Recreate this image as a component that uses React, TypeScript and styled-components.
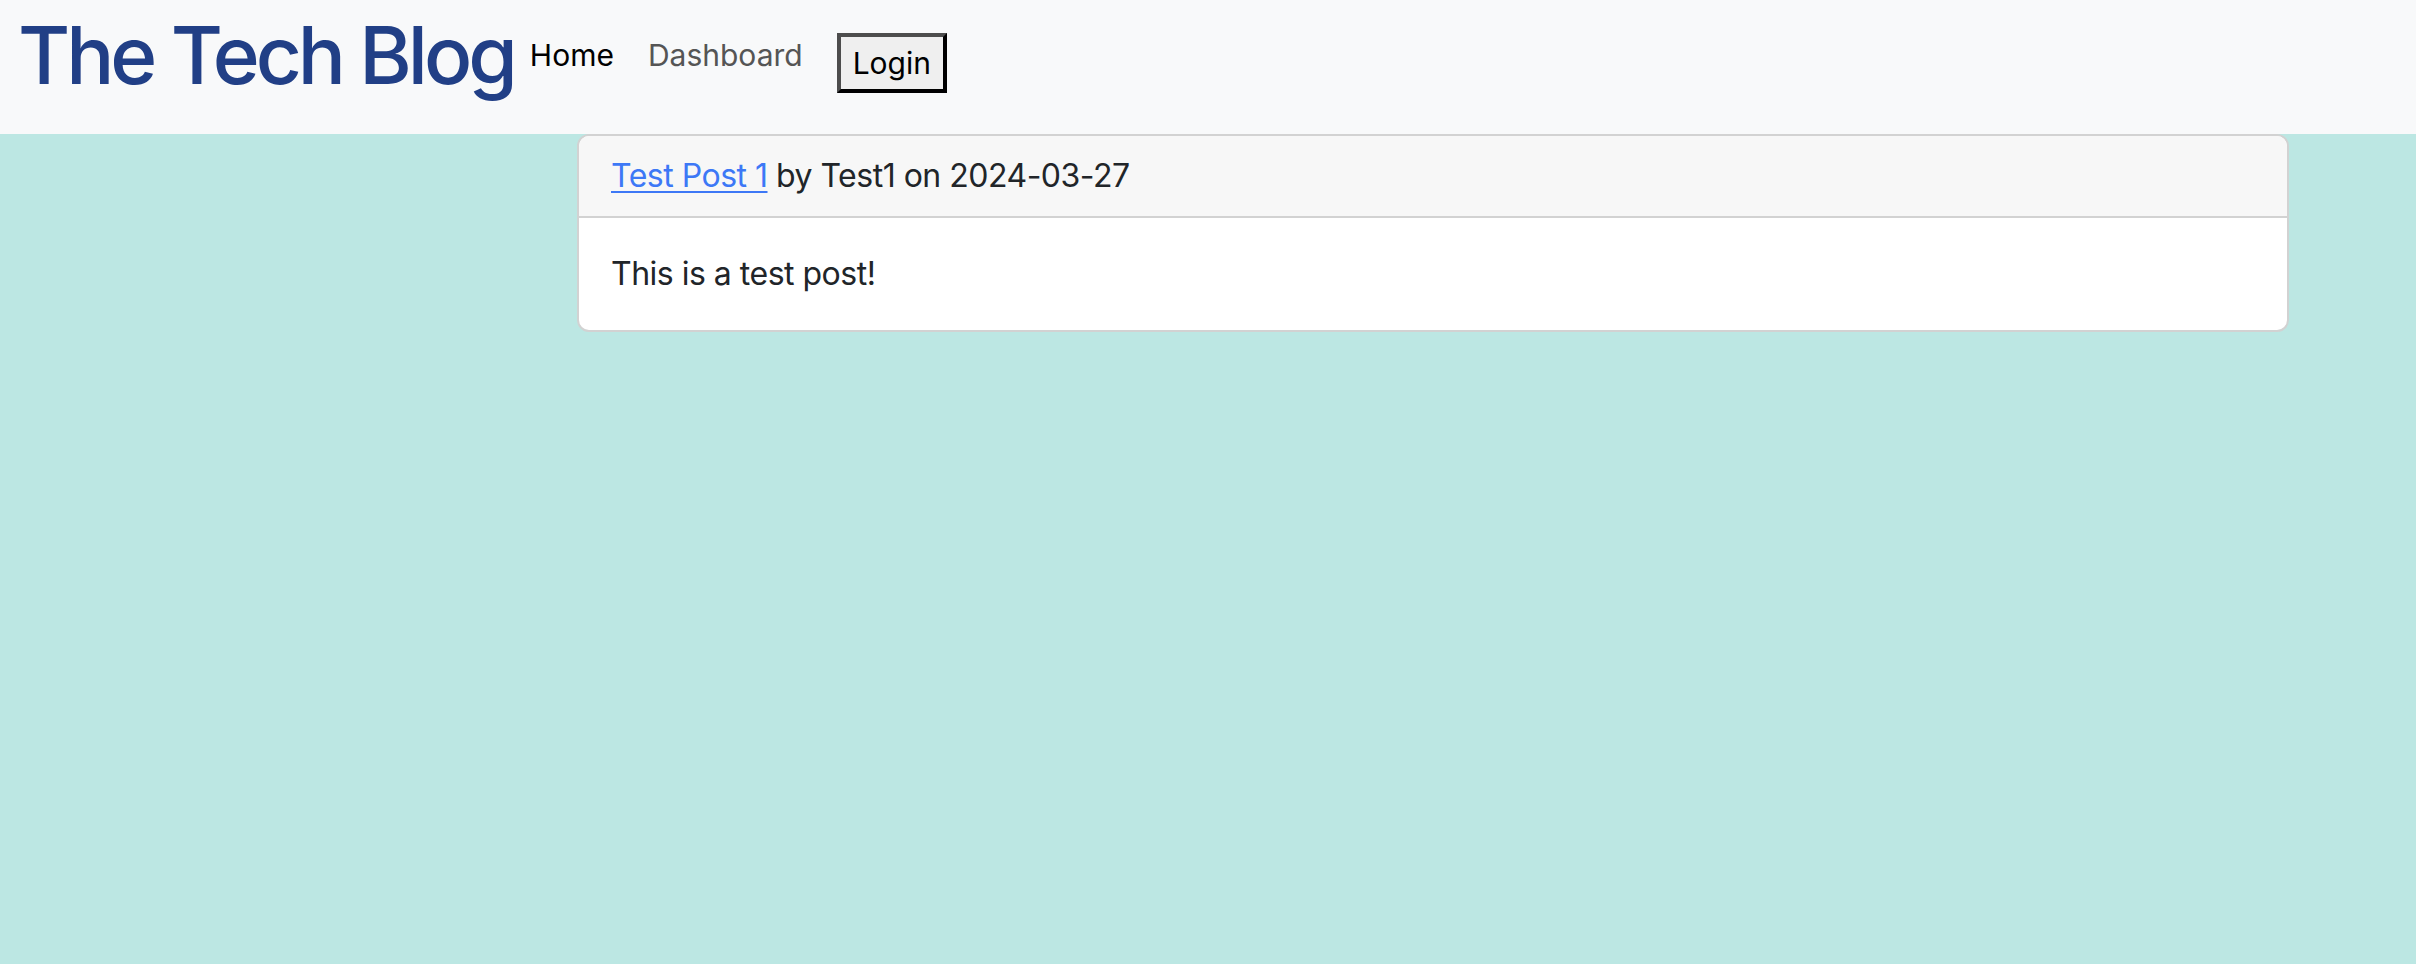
import React from "react";
import styled, { createGlobalStyle } from "styled-components";

const GlobalStyle = createGlobalStyle`
  html, body {
    margin: 0;
    padding: 0;
    min-height: 100%;
    background: #bce7e3;
  }
  body {
    font-family: Inter, "Liberation Sans", Arial, sans-serif;
    color: #212529;
    -webkit-font-smoothing: antialiased;
  }
  * { box-sizing: border-box; }
`;

const Page = styled.div`
  min-height: 964px;
  background: #bce7e3;
  display: flex;
  flex-direction: column;
`;

const Header = styled.header`
  height: 134px;
  background: #f8f9fa;
  display: flex;
  align-items: flex-start;
  padding: 7px 0 0 18px;
`;

const Title = styled.h1`
  margin: 0;
  font-size: 80px;
  line-height: 96px;
  font-weight: 500;
  color: #213f86;
  letter-spacing: -4px;
  white-space: nowrap;
`;

const Nav = styled.nav`
  display: flex;
  align-items: flex-start;
  gap: 34px;
  margin-left: 16px;
  padding-top: 26px;
`;

const NavLink = styled.a<{ $active?: boolean }>`
  font-size: 30px;
  line-height: 45px;
  letter-spacing: 0;
  color: ${(p) => (p.$active ? "#000000" : "#555555")};
  text-decoration: none;
  white-space: nowrap;
`;

const LoginButton = styled.button`
  margin-top: 0;
  font-family: Inter, "Liberation Sans", Arial, sans-serif;
  font-size: 30px;
  line-height: 52px;
  padding: 0 12px;
  background: #efefef;
  color: #000;
  border: 4px solid;
  border-color: #4d4d4d #000 #000 #4d4d4d;
  cursor: pointer;
`;

const Main = styled.main`
  display: flex;
  padding-left: 577px;
`;

const Card = styled.article`
  width: 1712px;
  background: #fff;
  border: 2px solid #d2d2d2;
  border-radius: 12px;
  overflow: hidden;
`;

const CardHeader = styled.div`
  background: #f7f7f7;
  border-bottom: 2px solid #d2d2d2;
  padding: 16px 32px;
  font-size: 32px;
  line-height: 48px;
  letter-spacing: -0.5px;
`;

const PostLink = styled.a`
  color: #3d78f6;
  text-decoration: underline;
  text-decoration-thickness: 2px;
  text-underline-offset: 4px;
`;

const CardBody = styled.div`
  padding: 32px;
  font-size: 32px;
  line-height: 48px;
  letter-spacing: -0.5px;
`;

export default function App() {
  return (
    <>
      <GlobalStyle />
      <Page>
        <Header>
          <Title>The Tech Blog</Title>
          <Nav>
            <NavLink href="#" $active>
              Home
            </NavLink>
            <NavLink href="#">Dashboard</NavLink>
            <LoginButton>Login</LoginButton>
          </Nav>
        </Header>
        <Main>
          <Card>
            <CardHeader>
              <PostLink href="#">Test Post 1</PostLink> by Test1 on 2024-03-27
            </CardHeader>
            <CardBody>This is a test post!</CardBody>
          </Card>
        </Main>
      </Page>
    </>
  );
}
